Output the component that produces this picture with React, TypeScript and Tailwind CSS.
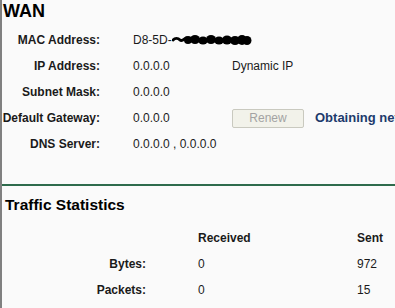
const font = { fontFamily: '"Liberation Sans", Arial, sans-serif' }

const wanRows = [
  { label: "MAC Address:", value: "D8-5D-", mac: true },
  { label: "IP Address:", value: "0.0.0.0", extra: "Dynamic IP" },
  { label: "Subnet Mask:", value: "0.0.0.0" },
  { label: "Default Gateway:", value: "0.0.0.0", renew: true },
  { label: "DNS Server:", value: "0.0.0.0 , 0.0.0.0" },
]

// redacted part of the MAC address: a rough ink blob
function Scribble() {
  return (
    <svg width="80" height="12" viewBox="0 0 80 12" className="inline-block align-middle -mt-[2px]">
      <path
        d="M1 6 C3 4 6 4 8 6 C10 8 12 5 14 4"
        stroke="#000"
        strokeWidth="3"
        fill="none"
        strokeLinecap="round"
      />
      <g fill="#000">
        <ellipse cx="16" cy="6" rx="4" ry="4" />
        <ellipse cx="23" cy="5.5" rx="5" ry="4.5" />
        <ellipse cx="31" cy="6.5" rx="5" ry="4" />
        <ellipse cx="39" cy="5.5" rx="5" ry="4.5" />
        <ellipse cx="47" cy="6.5" rx="5" ry="4" />
        <ellipse cx="55" cy="6" rx="5" ry="4.5" />
        <ellipse cx="63" cy="6.5" rx="5" ry="4.5" />
        <ellipse cx="70" cy="6" rx="5" ry="5" />
        <ellipse cx="75" cy="6.5" rx="4.5" ry="4.5" />
      </g>
    </svg>
  )
}

export default function App() {
  return (
    <div
      className="w-[395px] h-[308px] overflow-hidden bg-[#fafafa] border-l-2 border-[#808080] text-[12px] text-[#1a1a1a]"
      style={font}
    >
      <h1 className="pl-[1px] pt-[1px] text-[18px] leading-[20px] font-bold text-black">WAN</h1>

      <div className="mt-[6px] flex flex-col">
        {wanRows.map((r) => (
          <div key={r.label} className="flex items-center h-[26px] whitespace-nowrap">
            <div className="w-[98px] shrink-0 text-right font-bold">{r.label}</div>
            <div className="pl-[33px] shrink-0 flex items-center">
              <span className="w-[99px] shrink-0">
                {r.value}
                {r.mac && <Scribble />}
              </span>
              {r.extra && <span>{r.extra}</span>}
              {r.renew && (
                <>
                  <button
                    disabled
                    className="w-[72px] h-[19px] shrink-0 rounded-[2px] border border-[#c9c9bf] bg-[#f2f2ea] text-[#a3a3a3] text-[12px] leading-[17px]"
                    style={font}
                  >
                    Renew
                  </button>
                  <span className="ml-[11px] text-[13px] font-bold text-[#1d3a6c]">Obtaining network parameters...</span>
                </>
              )}
            </div>
          </div>
        ))}
      </div>

      <div className="mt-[27px] h-[2px] bg-[#2e6b4c] -ml-[2px]" />

      <h2 className="mt-[10px] pl-[3px] text-[15.5px] leading-[18px] font-bold text-black">Traffic Statistics</h2>

      <div className="mt-[11px] flex flex-col">
        {[
          { label: "", a: "Received", b: "Sent", head: true },
          { label: "Bytes:", a: "0", b: "972" },
          { label: "Packets:", a: "0", b: "15" },
        ].map((r, i) => (
          <div key={i} className="flex items-center h-[26px]">
            <div className="w-[144px] text-right font-bold">{r.label}</div>
            <div className={`ml-[52px] w-[159px] ${r.head ? "font-bold" : ""}`}>{r.a}</div>
            <div className={r.head ? "font-bold" : ""}>{r.b}</div>
          </div>
        ))}
      </div>
    </div>
  )
}
